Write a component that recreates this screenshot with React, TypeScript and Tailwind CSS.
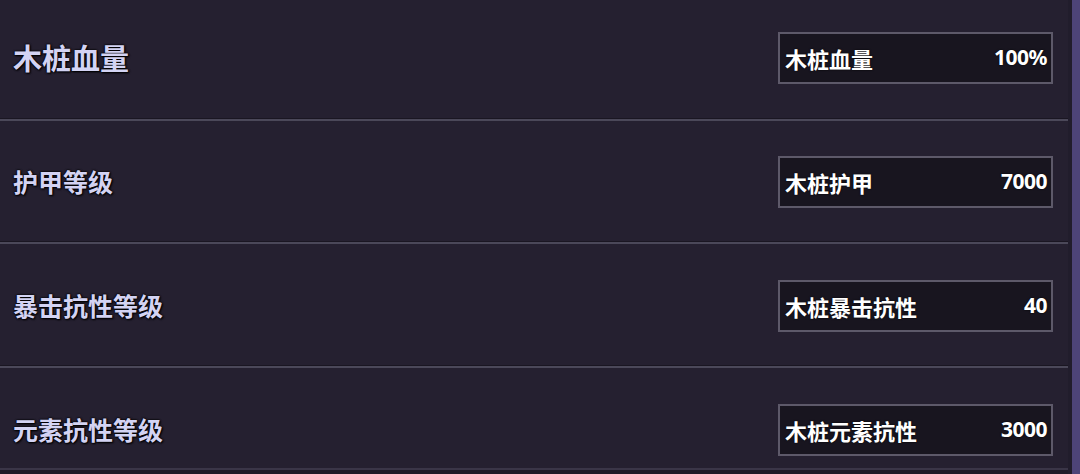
import React from "react";

const rows = [
  { label: "木桩血量", name: "木桩血量", value: "100%", big: true, h: "h-[119px]", pt: "pt-[32px]" },
  { label: "护甲等级", name: "木桩护甲", value: "7000", big: false, h: "h-[121px]", pt: "pt-[35px]" },
  { label: "暴击抗性等级", name: "木桩暴击抗性", value: "40", big: false, h: "h-[122px]", pt: "pt-[36px]" },
  { label: "元素抗性等级", name: "木桩元素抗性", value: "3000", big: false, h: "h-[100px]", pt: "pt-[36px]" },
];

export default function App() {
  return (
    <div
      className="w-[1080px] h-[474px] overflow-hidden flex bg-[#1c1824]"
      style={{ fontFamily: '"Noto Sans CJK SC", "Noto Sans", sans-serif' }}
    >
      <div className="w-[1068px] flex flex-col bg-[#252030]">
        {rows.map((r, i) => (
          <div key={i} className="flex flex-col">
            <div className={`${r.h} ${r.pt} pl-[13px] pr-[15px]`}>
              <div className="h-[52px] flex items-center justify-between">
                <span
                  className={`${r.big ? "text-[29px]" : "text-[25px]"} font-bold text-[#d3d3f3] [text-shadow:0_0_2px_#000,0_0_2px_#000,1px_1px_2px_#000]`}
                >
                  {r.label}
                </span>
                <div className="w-[275px] h-[52px] border-2 border-[#5d5969] bg-[#18151f] flex items-center justify-between pl-[5px] pr-[4px]">
                  <span className="text-[22px] font-bold text-white [text-shadow:0_0_2px_#000]">{r.name}</span>
                  <span className="font-['Noto_Sans',sans-serif] text-[21px] tracking-[-0.5px] font-bold text-white [text-shadow:0_0_2px_#000]">{r.value}</span>
                </div>
              </div>
            </div>
            {i < 3 && <div className="h-[2px] bg-[#4b4859] shadow-[0_-1px_0_#1a1622]" />}
          </div>
        ))}
        <div className="flex-1 bg-[#1f1b28] border-t-2 border-[#3a3547]" />
      </div>
      <div className="w-[4px] bg-[#211d2c]" />
      <div className="flex-1 bg-[#4d4478]" />
    </div>
  );
}
